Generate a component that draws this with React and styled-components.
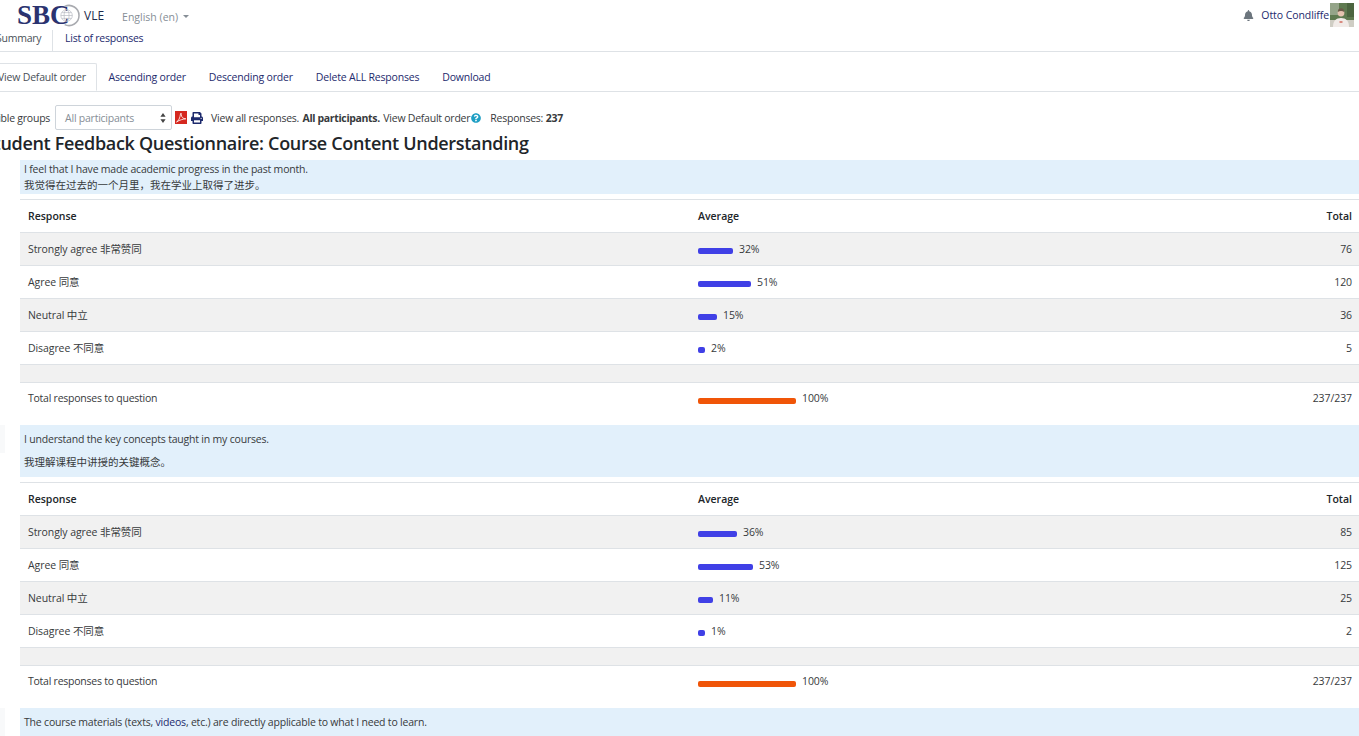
import React from 'react'
import styled, { createGlobalStyle } from 'styled-components'
import { FaBell, FaPrint, FaQuestionCircle } from 'react-icons/fa'

const questions = [
  {
    lines: ['I feel that I have made academic progress in the past month.', '我觉得在过去的一个月里\uFF0C我在学业上取得了进步。'],
    tight: true,
    rows: [
      ['Strongly agree 非常赞同', 32, 35, 76],
      ['Agree 同意', 51, 53, 120],
      ['Neutral 中立', 15, 19, 36],
      ['Disagree 不同意', 2, 7, 5],
    ],
  },
  {
    lines: ['I understand the key concepts taught in my courses.', '我理解课程中讲授的关键概念。'],
    marked: true,
    rows: [
      ['Strongly agree 非常赞同', 36, 39, 85],
      ['Agree 同意', 53, 55, 125],
      ['Neutral 中立', 11, 15, 25],
      ['Disagree 不同意', 1, 7, 2],
    ],
  },
]

function App() {
  return (
    <Page>
      <GlobalStyle />
      <TopBar>
        <Logo>
          <LogoText>SBC</LogoText>
          <Globe viewBox="0 0 24 24">
            <path d="M8 2.500a10.500 10.500 0 1 1 0 19" fill="none" stroke="#a9abb0" strokeWidth="1.6" />
            <circle cx="10" cy="12" r="6" fill="none" stroke="#b5b8c0" strokeWidth="0.7" />
            <ellipse cx="10" cy="12" rx="2.600" ry="6" fill="none" stroke="#b5b8c0" strokeWidth="0.7" />
            <path d="M4 12h12M5 9h10M5 15h10" stroke="#b5b8c0" strokeWidth="0.7" />
          </Globe>
        </Logo>
        <SiteName>VLE</SiteName>
        <Language>
          English (en)
          <Caret />
        </Language>
        <UserMenu>
          <FaBell size={11} color="#6c757d" />
          <UserName>Otto Condliffe</UserName>
          <Avatar viewBox="0 0 24 24">
            <rect width="24" height="24" fill="#5f7a50" />
            <rect width="9" height="12" fill="#94a488" />
            <rect x="17" width="7" height="14" fill="#4c6540" />
            <rect y="17" width="24" height="7" fill="#cfcdc4" />
            <path d="M3 24c0-6 3-9 8-9s8 3 8 9z" fill="#f1ebe8" />
            <circle cx="11" cy="10" r="3.400" fill="#e6c3b0" />
            <path d="M7.800 9c0-3 1.400-3.800 3.200-3.800s3.200 .8 3.200 3.800c-1.800-1.200-4.600-1.200-6.400 0z" fill="#6b5a48" />
            <path d="M9.500 18h3v2h-3z" fill="#d98a80" />
          </Avatar>
        </UserMenu>
      </TopBar>

      <Main>
        <PrimaryTabs>
          <PrimaryTab $active>Summary</PrimaryTab>
          <PrimaryTab>List of responses</PrimaryTab>
        </PrimaryTabs>

        <SecondaryTabs>
          <SecondaryTab $active>View Default order</SecondaryTab>
          <SecondaryTab>Ascending order</SecondaryTab>
          <SecondaryTab>Descending order</SecondaryTab>
          <SecondaryTab>Delete ALL Responses</SecondaryTab>
          <SecondaryTab>Download</SecondaryTab>
        </SecondaryTabs>

        <FilterRow>
          <span>Visible groups</span>
          <GroupSelect>
            All participants
            <svg width="6" height="10" viewBox="0 0 6 10">
              <path d="M3 0l2.600 3.800H.4zM3 10L.4 6.200h5.200z" fill="#444" />
            </svg>
          </GroupSelect>
          <PdfIcon viewBox="0 0 12 13">
            <rect width="12" height="13" fill="#d5281f" />
            <path d="M1.500 11c2-1 3.500-4 4-8 .3-1.500 1-1 .8.500-.2 2.500 2 4.500 4.500 4.300-2.500.3-6 1-9.300 3.200z" fill="none" stroke="#fff" strokeWidth="0.8" />
          </PdfIcon>
          <FaPrint size={12} color="#1d2a6d" />
          <Summary>
            View all responses. <b>All participants.</b> View Default order
            <FaQuestionCircle size={10} color="#1f9fc4" />
          </Summary>
          <Responses>
            Responses: <b>237</b>
          </Responses>
        </FilterRow>

        <Heading>Student Feedback Questionnaire: Course Content Understanding</Heading>

        {questions.map((q) => (
          <Question key={q.lines[0]}>
            <QuestionHead>
              <Gutter $marked={q.marked} />
              <QuestionText $tight={q.tight}>
                {q.lines.map((line) => (
                  <p key={line}>{line}</p>
                ))}
              </QuestionText>
            </QuestionHead>
            <ResultTable>
              <thead>
                <tr>
                  <HeadCell>Response</HeadCell>
                  <HeadCell>Average</HeadCell>
                  <HeadCell $right>Total</HeadCell>
                </tr>
              </thead>
              <tbody>
                {q.rows.map(([label, pct, width, total]) => (
                  <Row key={label}>
                    <Cell>{label}</Cell>
                    <Cell>
                      <Bar $width={width} />
                      {pct}%
                    </Cell>
                    <Cell $right>{total}</Cell>
                  </Row>
                ))}
                <Row>
                  <SpacerCell colSpan={3} />
                </Row>
                <Row>
                  <TotalLabel>Total responses to question</TotalLabel>
                  <Cell>
                    <Bar $width={98} $total />
                    100%
                  </Cell>
                  <Cell $right>237/237</Cell>
                </Row>
              </tbody>
            </ResultTable>
          </Question>
        ))}

        <QuestionHead>
          <Gutter $marked />
          <QuestionText>
            <p>
              The course materials (texts, <VideoLink>videos</VideoLink>, etc.) are directly applicable to what I need to learn.
            </p>
          </QuestionText>
        </QuestionHead>
      </Main>
    </Page>
  )
}

export default App


const GlobalStyle = createGlobalStyle`
    html, body {
        margin: 0;
        height: 100%;
        overflow: hidden;
        background: #fff;
    }
    body {
        font-family: "Open Sans", "Noto Sans CJK SC", sans-serif;
        font-size: 10.5px;
        letter-spacing: -0.24px;
        color: #373a3c;
    }
`


const Page = styled.div`
    width: 1359px;
    height: 736px;
    overflow: hidden;
`


const TopBar = styled.div`
    height: 30px;
    display: flex;
    align-items: center;
    padding: 0 5px 0 17px;
`


const Logo = styled.div`
    display: flex;
    align-items: center;
    width: 67px;
`


const LogoText = styled.span`
    font-family: "Liberation Serif", serif;
    font-weight: 700;
    font-size: 27px;
    letter-spacing: 0;
    color: #2b3370;
`


const Globe = styled.svg`
    width: 23px;
    height: 23px;
    flex: none;
    margin-left: -13px;
`


const SiteName = styled.span`
    font-size: 12px;
    letter-spacing: 0;
    color: #1d2a4d;
`


const Language = styled.div`
    display: flex;
    align-items: center;
    margin: 3px 0 0 18px;
    font-size: 10.5px;
    letter-spacing: 0;
    color: #868e96;
`


const Caret = styled.i`
    margin-left: 5px;
    border-top: 3px solid #868e96;
    border-left: 3px solid transparent;
    border-right: 3px solid transparent;
`


const UserMenu = styled.div`
    margin-left: auto;
    display: flex;
    align-items: center;
`


const UserName = styled.span`
    margin-left: 7px;
    letter-spacing: -0.08px;
    color: #1d2a6d;
`


const Avatar = styled.svg`
    width: 24px;
    height: 24px;
    margin-left: 1px;
`


const Main = styled.div`
    margin-left: -40px;
`


const PrimaryTabs = styled.div`
    display: flex;
    height: 21px;
    border-bottom: 1px solid #dee2e6;
`


const PrimaryTab = styled.div`
    width: ${(p) => (p.$active ? '93px' : 'auto')};
    padding: 1px ${(p) => (p.$active ? '0' : '12px')} 0 ${(p) => (p.$active ? '36px' : '12px')};
    box-sizing: border-box;
    color: ${(p) => (p.$active ? '#495057' : '#1d2a6d')};
    border-right: ${(p) => (p.$active ? '1px solid #dee2e6' : 'none')};
    background: #fff;
`


const SecondaryTabs = styled.div`
    display: flex;
    height: 28px;
    margin-top: 11px;
    border-bottom: 1px solid #dee2e6;
`


const SecondaryTab = styled.div`
    display: flex;
    align-items: center;
    padding: 0 11.5px;
    height: 28px;
    white-space: nowrap;
    letter-spacing: -0.19px;
    color: ${(p) => (p.$active ? '#495057' : '#1d2a6d')};
    background: #fff;
    ${(p) => p.$active && `
        width: 137px;
        box-sizing: border-box;
        padding-left: 37px;
        border: 1px solid #dee2e6;
        border-bottom-color: #fff;
        border-radius: 2px 2px 0 0;
    `}
`


const FilterRow = styled.div`
    display: flex;
    align-items: center;
    height: 25px;
    margin: 13px 0 0 25px;
    white-space: nowrap;
`


const GroupSelect = styled.div`
    width: 117px;
    height: 25px;
    box-sizing: border-box;
    margin-left: 5px;
    padding: 0 5px 0 9px;
    display: flex;
    align-items: center;
    justify-content: space-between;
    color: #868e96;
    border: 1px solid #ced4da;
    border-radius: 2px;
`


const PdfIcon = styled.svg`
    width: 12px;
    height: 13px;
    margin: 0 4px 0 3px;
`


const Summary = styled.span`
    display: inline-flex;
    align-items: center;
    gap: 1px;
    margin-left: 8px;
    white-space: pre;

    b {
        letter-spacing: -0.35px;
    }
`


const Responses = styled.span`
    margin-left: 9px;
    white-space: pre;
`


const Heading = styled.h1`
    margin: 0 0 4px 24px;
    font-size: 18px;
    line-height: 26px;
    font-weight: 600;
    letter-spacing: -0.32px;
    color: #212529;
    white-space: nowrap;
`


const Question = styled.section`
    margin-bottom: 10px;
`


const QuestionHead = styled.div`
    display: flex;
    align-items: flex-start;
`


const Gutter = styled.div`
    width: 45px;
    height: 28px;
    flex: none;
    background: ${(p) => (p.$marked ? '#f8f9fa' : 'transparent')};
`


const QuestionText = styled.div`
    flex: 1;
    margin-left: 15px;
    padding: ${(p) => (p.$tight ? '1px 4px' : '7px 4px')};
    background: #e2f0fb;
    letter-spacing: -0.2px;
    line-height: ${(p) => (p.$tight ? '16px' : '15px')};

    p {
        margin: ${(p) => (p.$tight ? '0' : '0 0 8px')};
    }
    p + p {
        letter-spacing: 0;
    }
    p:last-child {
        margin-bottom: 0;
    }
`


const ResultTable = styled.table`
    width: calc(100% - 60px);
    margin: 5px 0 0 60px;
    border-collapse: collapse;
    table-layout: fixed;
`


const HeadCell = styled.th`
    height: 33px;
    padding: 0 7px 0 8px;
    box-sizing: border-box;
    border-top: 1px solid #dee2e6;
    border-bottom: 1px solid #dee2e6;
    font-weight: 600;
    letter-spacing: 0;
    color: #212529;
    text-align: ${(p) => (p.$right ? 'right' : 'left')};

    &:first-child {
        width: 670px;
    }
`


const Row = styled.tr`
    &:nth-child(odd) {
        background: #f1f1f1;
    }
`


const Cell = styled.td`
    height: 33px;
    padding: 0 7px 1px 8px;
    box-sizing: border-box;
    border-bottom: 1px solid #dee2e6;
    letter-spacing: -0.08px;
    text-align: ${(p) => (p.$right ? 'right' : 'left')};

    tr:last-child > & {
        border-bottom: none;
    }
`


const TotalLabel = styled(Cell)`
    letter-spacing: -0.24px;
`


const SpacerCell = styled.td`
    height: 16.5px;
    padding: 0;
    border-bottom: 1px solid #dee2e6;
`


const Bar = styled.span`
    display: inline-block;
    width: ${(p) => p.$width}px;
    height: 6px;
    margin-right: 6px;
    vertical-align: -1.5px;
    border-radius: 2px;
    background: ${(p) => (p.$total ? '#f05508' : '#4040e6')};
`


const VideoLink = styled.span`
    color: #1d2a6d;
`
